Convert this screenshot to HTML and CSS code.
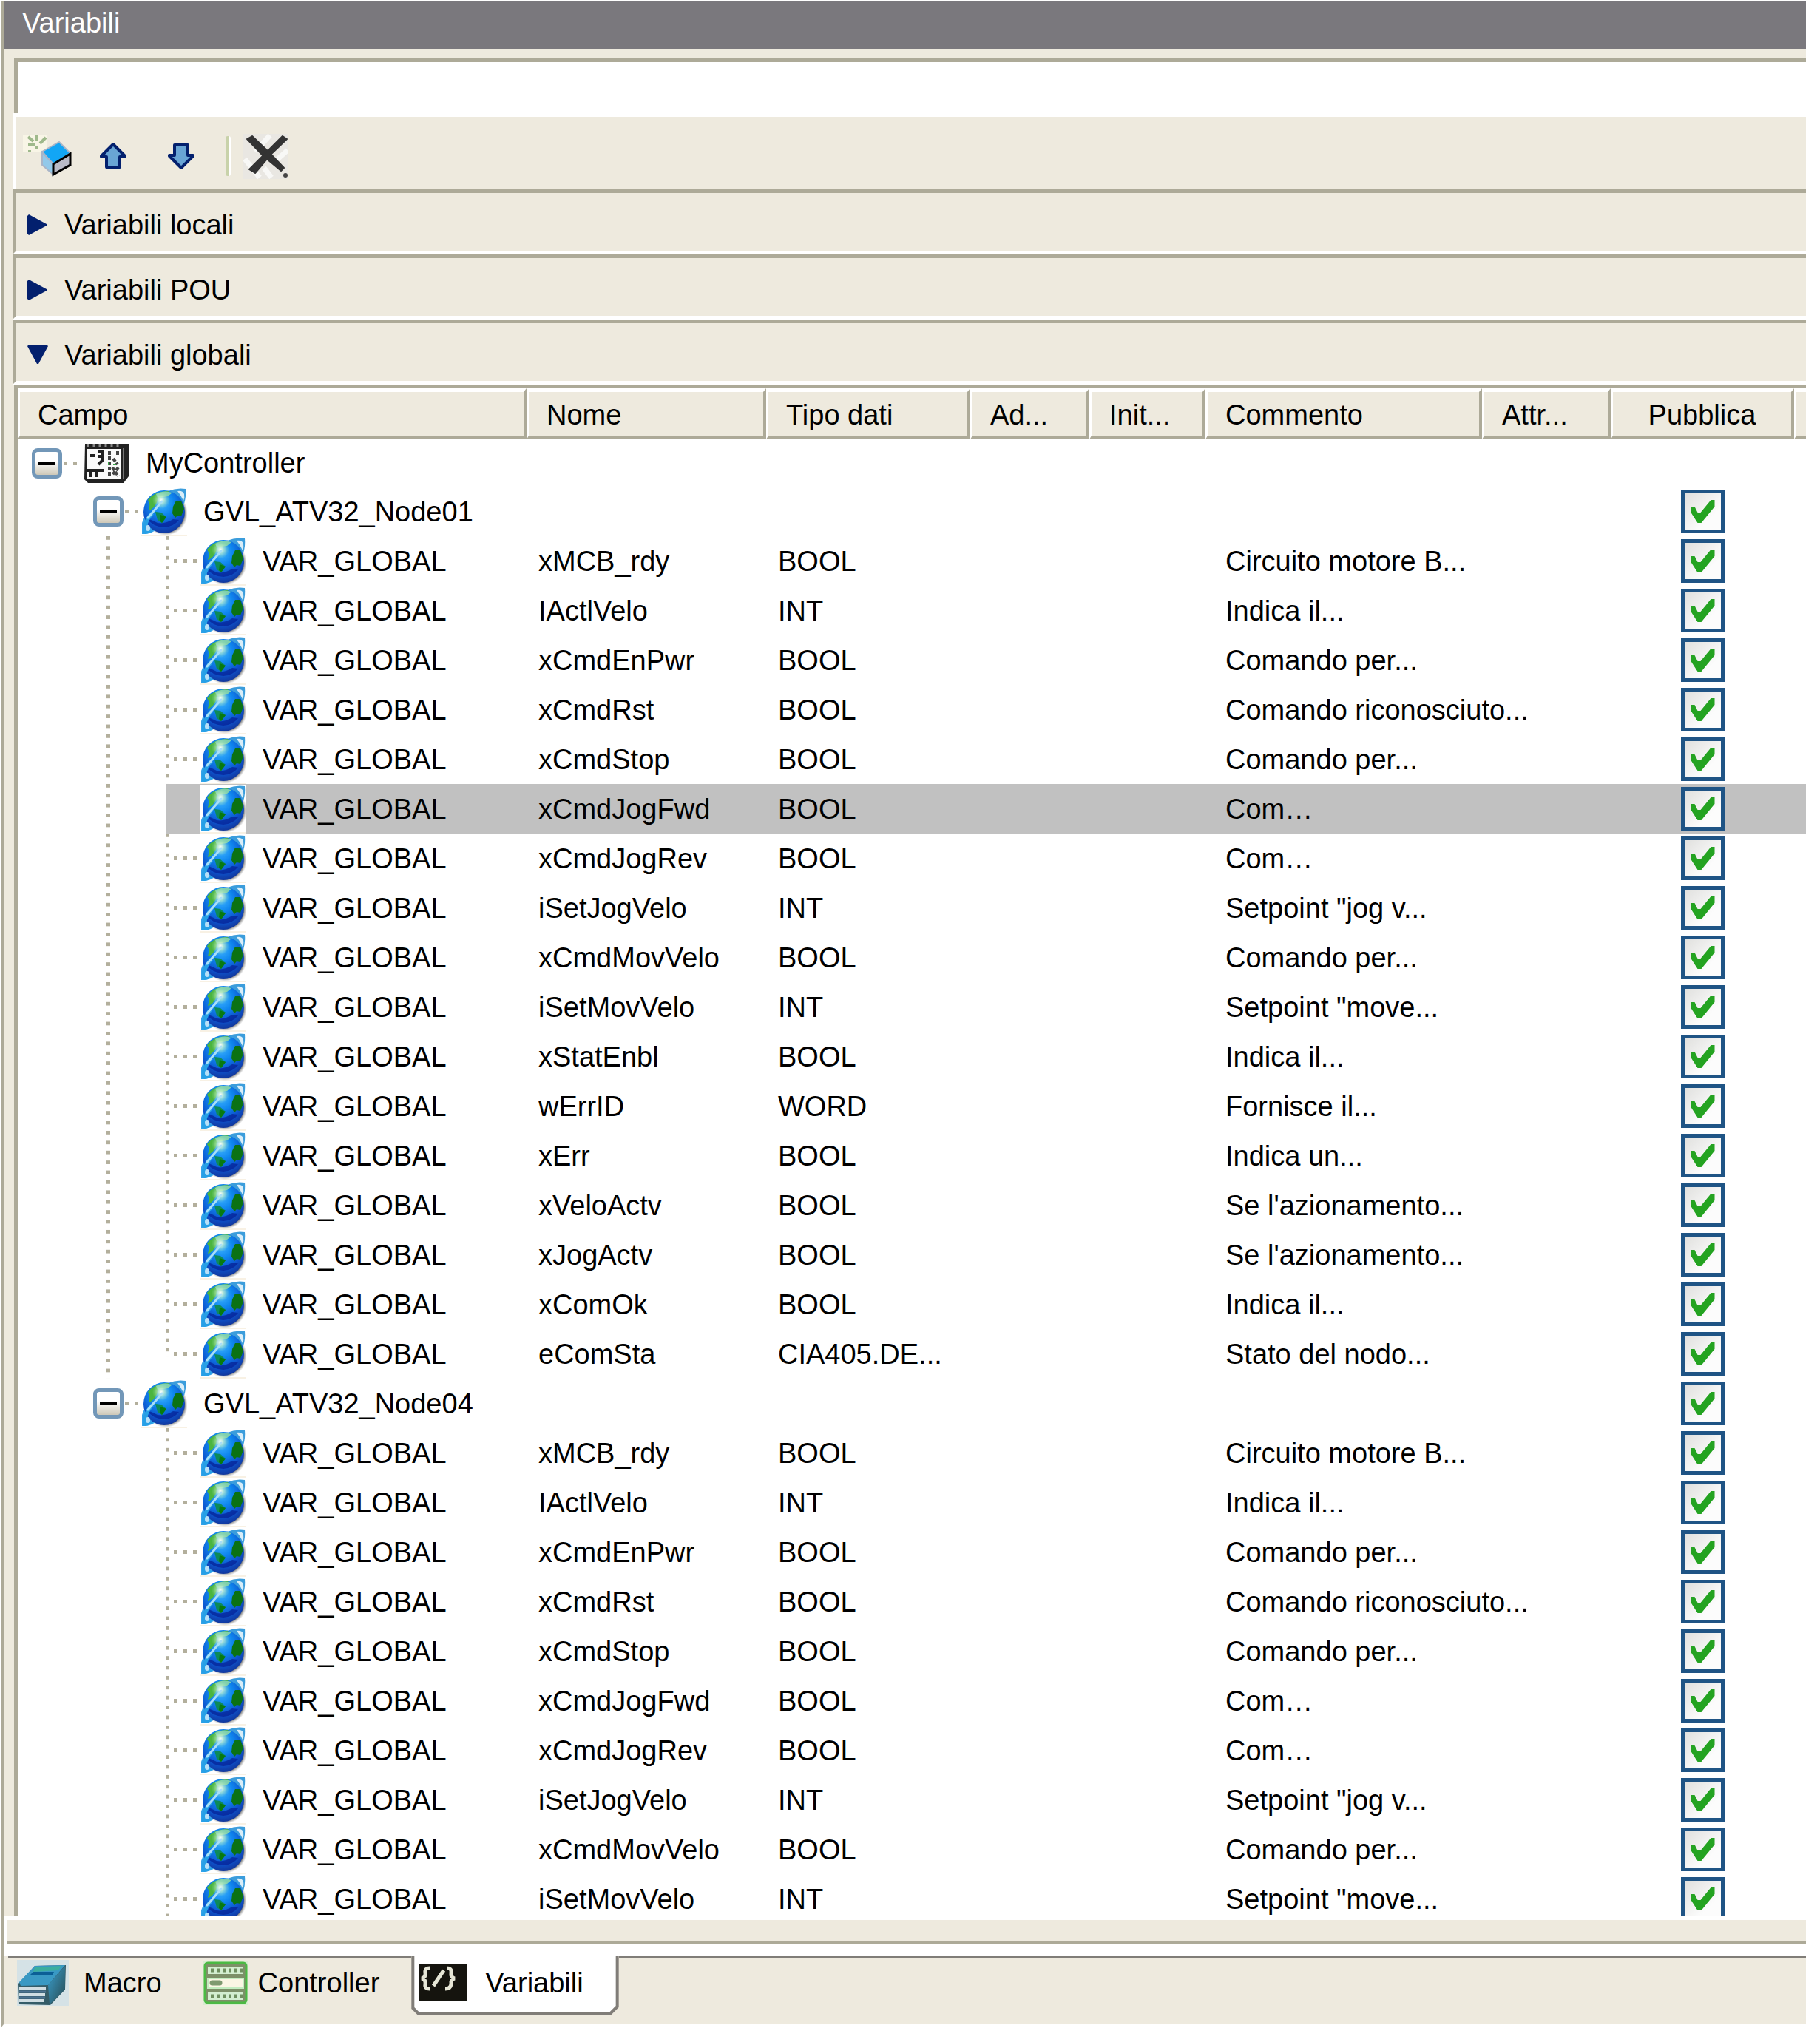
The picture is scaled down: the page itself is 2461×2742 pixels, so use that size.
FILE: index.html
```html
<!DOCTYPE html>
<html lang="it">
<head>
    <meta charset="UTF-8">
    <meta name="viewport" content="width=device-width, initial-scale=1.0">
    <title>Variabili</title>
    <link rel="stylesheet" href="styles.css">
</head>
<body>
    <!-- Shared icons -->
    <svg class="defs" width="0" height="0" aria-hidden="true">
        <defs>
            <radialGradient id="sea" cx="0.45" cy="0.3" r="0.7">
                <stop offset="0" stop-color="#3fb4ff"/>
                <stop offset="0.4" stop-color="#0f86ee"/>
                <stop offset="0.75" stop-color="#0d52cc"/>
                <stop offset="1" stop-color="#12389e"/>
            </radialGradient>
            <radialGradient id="shine">
                <stop offset="0" stop-color="#fff"/>
                <stop offset="0.3" stop-color="#d8f8d0" stop-opacity="0.8"/>
                <stop offset="1" stop-color="#9be0b0" stop-opacity="0"/>
            </radialGradient>
            <radialGradient id="shadow">
                <stop offset="0.8" stop-color="#333"/>
                <stop offset="1" stop-color="#999" stop-opacity="0"/>
            </radialGradient>
            <linearGradient id="side" x1="0" y1="0" x2="1" y2="1">
                <stop offset="0" stop-color="#3aa0d0"/>
                <stop offset="1" stop-color="#274a50"/>
            </linearGradient>
        </defs>
        <symbol id="globe" viewBox="0 0 62 66">
            <rect width="62" height="66" fill="#fff"/>
            <rect y="64" width="62" height="2" fill="#f8f1e4"/>
            <circle cx="33" cy="35" r="30" fill="url(#shadow)"/>
            <path d="M1 63 V48 Q4 38 12 32 L24 54 Q14 64 1 63Z" fill="#35a3ea"/>
            <path d="M36 5 Q48 0 60 2 Q61 12 58 22 L46 18Z" fill="#3b9ddc"/>
            <ellipse cx="31" cy="33" rx="28" ry="29" fill="url(#sea)"/>
            <path d="M9 17 Q18 5 38 5 Q30 12 22 14 Q22 24 13 30 L10 31 Q13 22 9 17Z" fill="#4bb53f"/>
            <path d="M20 9 Q30 3 42 7 L36 12 L22 14Z" fill="#7fcfae"/>
            <path d="M47 18 L54 18 L58 29 L54 39 L49 38 L46 41 L42 35 L43 26Z" fill="#0b7214"/>
            <path d="M19 33 L27 34 L34 40 L28 48 L22 44Z" fill="#0d8a5a"/>
            <path d="M26 37 L34 40 L28 48 L25 45Z" fill="#087a10"/>
            <path d="M8 42 Q14 44 22 48 Q32 50 43 43 L51 44 Q44 53 31 54 Q15 53 8 42Z" fill="#061f93" opacity="0.7"/>
            <circle cx="27" cy="17" r="12" fill="url(#shine)"/>
            <path d="M2 52 Q6 40 13 33 L17 36 Q9 45 8 53 Q10 57 16 58 Q8 65 2 62Z" fill="#27a0e6"/>
            <path d="M9 41 L28 19" stroke="#a9dff8" stroke-width="3" stroke-linecap="round"/>
            <ellipse cx="9" cy="55" rx="3" ry="4" fill="#b8e0f8"/>
            <path d="M49 5 Q56 4 58 9 Q59 14 57 18 Q54 11 49 5Z" fill="#d9edf8"/>
        </symbol>
        <symbol id="plc" viewBox="0 0 62 56">
            <path d="M2 2 H61 V46 L54 55 H6 L1 50Z" fill="#222"/>
            <path d="M4 9 H50 V49 H4Z" fill="#fafafa"/>
            <path d="M54 8 V50" stroke="#777" stroke-width="2"/>
            <path d="M6 2 V6 M14 2 V6 M22 2 V6 M30 2 V6 M38 2 V6 M46 2 V6" stroke="#888" stroke-width="3"/>
            <path d="M9 18 H16 M20 13 H27 M25 13 V25 L20 30 M20 19 H26 M5 38 H28 M10 39 V47 M18 39 V47" stroke="#222" stroke-width="4" fill="none"/>
            <path d="M35 12 V47 M40 22 L46 30 M46 12 V19 M39 34 L47 46 M47 34 L39 44" stroke="#444" stroke-width="4" stroke-dasharray="5 2"/>
            <path d="M34 26 V31 M40 30 H44" stroke="#3ba648" stroke-width="2"/>
        </symbol>
    </svg>

    <div class="panel">
        <h1 class="title">Variabili</h1>
        <input class="filter" type="text" aria-label="Filtro">

        <div class="toolbar">
            <button type="button" class="tool" aria-label="Nuova variabile">
                <svg width="66" height="56" viewBox="0 0 66 56">
                    <rect width="33" height="23" fill="#f8f5e6"/>
                    <path d="M7 2 L14 8 M19 0 V7 M31 3 L23 11 M7 13 H16 M19 15 V18 M9 20 V22" stroke="#9fb98c" stroke-width="4"/>
                    <path d="M26 22 L49 9 L64 24 L41 39Z" fill="#12a6f5" stroke="#a9b5c8" stroke-width="2"/>
                    <path d="M26 23 L41 39 V53 L26 40Z" fill="#92c9ea" stroke="#a9b5c8" stroke-width="2"/>
                    <path d="M41 39 L64 25 V40 L41 53Z" fill="#b9bac6" stroke="#000" stroke-width="3"/>
                </svg>
            </button>
            <button type="button" class="tool" aria-label="Sposta su">
                <svg width="36" height="36" viewBox="0 0 36 36">
                    <path d="M18 2 L34 18 V19 H27 V33 H9 V19 H2 V18Z" fill="#69a5d5" stroke="#03206e" stroke-width="4" stroke-linejoin="round"/>
                </svg>
            </button>
            <button type="button" class="tool" aria-label="Sposta giù">
                <svg width="36" height="36" viewBox="0 0 36 36">
                    <path d="M18 34 L34 18 V17 H27 V3 H9 V17 H2 V18Z" fill="#69a5d5" stroke="#03206e" stroke-width="4" stroke-linejoin="round"/>
                </svg>
            </button>
            <span class="separator"></span>
            <button type="button" class="tool" aria-label="Elimina">
                <svg width="61" height="61" viewBox="0 0 61 61">
                    <rect width="61" height="61" fill="#e9e7e2"/>
                    <path d="M2 34 L22 59 M36 2 L16 24 M60 22 L42 38 M28 46 L38 59" stroke="#f8f8f6" stroke-width="7"/>
                    <path d="M5 7 L12 3 L34 24 L55 46 L51 50 L27 30Z" fill="#333" stroke="#333" stroke-width="2" stroke-linejoin="round"/>
                    <path d="M53 3 L59 7 L37 28 L16 53 L8 48 L30 26Z" fill="#333" stroke="#333" stroke-width="2" stroke-linejoin="round"/>
                    <circle cx="57" cy="56" r="3" fill="#444"/>
                </svg>
            </button>
        </div>

        <button type="button" class="section" aria-expanded="false"><span class="arrow"></span>Variabili locali</button>
        <button type="button" class="section" aria-expanded="false"><span class="arrow"></span>Variabili POU</button>
        <button type="button" class="section" aria-expanded="true"><span class="arrow open"></span>Variabili globali</button>

        <div class="grid">
            <table>
                <colgroup>
                    <col class="col-campo">
                    <col class="col-nome">
                    <col class="col-tipo">
                    <col class="col-ad">
                    <col class="col-init">
                    <col>
                    <col class="col-attr">
                    <col class="col-pub">
                    <col class="col-end">
                </colgroup>
                <thead>
                    <tr>
                        <th>Campo</th>
                        <th>Nome</th>
                        <th>Tipo dati</th>
                        <th>Ad...</th>
                        <th>Init...</th>
                        <th>Commento</th>
                        <th>Attr...</th>
                        <th class="center">Pubblica</th>
                        <th></th>
                    </tr>
                </thead>
                <tbody id="rows"></tbody>
            </table>
        </div>

        <div class="splitter"></div>

        <div class="tabs">
            <button type="button" class="tab">
                <svg width="70" height="62" viewBox="0 0 70 62">
                    <rect width="70" height="62" fill="#d5e2e6"/>
                    <path d="M2 32 L24 8 L66 7 L65 40 L45 61 L3 60Z" fill="#345c68"/>
                    <path d="M3 30 L24 8 L65 7 L42 34 L5 35Z" fill="#3999c4"/>
                    <path d="M24 10 L60 8 L56 14 L22 16Z" fill="#3cae9e"/>
                    <path d="M22 16 H50 L48 20 H18Z" fill="#0b5f96"/>
                    <path d="M42 34 L65 8 V40 L44 60Z" fill="url(#side)"/>
                    <path d="M3 39 H39 M3 47 H38 M3 55 H37" stroke="#cfdde2" stroke-width="4"/>
                    <path d="M3 43 H39 M3 51 H38" stroke="#4b7190" stroke-width="3"/>
                </svg>
                Macro
            </button>
            <button type="button" class="tab">
                <svg width="60" height="60" viewBox="0 0 60 60">
                    <rect width="60" height="60" fill="#d8ecd0"/>
                    <rect x="2" y="3" width="56" height="54" rx="4" fill="#7d9068" stroke="#4cb944" stroke-width="3"/>
                    <rect x="6" y="8" width="48" height="10" fill="#d3eed0"/>
                    <rect x="6" y="24" width="48" height="13" fill="#fbf6e4" stroke="#c3edc0" stroke-width="2"/>
                    <rect x="6" y="43" width="48" height="10" fill="#d3eed0"/>
                    <path d="M10 13 H53 M10 48 H53" stroke="#6f8f5f" stroke-width="5" stroke-dasharray="4 4"/>
                    <path d="M12 30 H22" stroke="#7f9a70" stroke-width="7" stroke-linecap="round"/>
                </svg>
                Controller
            </button>
            <button type="button" class="tab active">
                <svg width="66" height="50" viewBox="0 0 66 50">
                    <rect width="66" height="50" fill="#15140e"/>
                    <path d="M15 5 Q8 5 9 11 Q10 18 4 19 Q10 20 9 27 Q8 33 15 33 M38 5 Q45 5 44 11 Q43 18 49 19 Q43 20 44 27 Q43 33 36 33 M34 8 L20 29" fill="none" stroke="#e6e6d6" stroke-width="5"/>
                </svg>
                Variabili
            </button>
            <span class="tab-rest"></span>
        </div>
    </div>

    <script src="script.js"></script>
</body>
</html>
```

FILE: styles.css
```css
* {
    box-sizing: border-box;
}

body {
    margin: 0;
    padding: 2px 19px 0 1px;
    background-color: #fff;
    color: #000;
    font-family: "Arial Narrow", "Liberation Sans", Arial, sans-serif;
    font-size: 38px;
    line-height: 50px;
}

button,
input {
    margin: 0;
    padding: 0;
    border: none;
    background: none;
    color: inherit;
    font: inherit;
}

svg {
    display: block;
    flex: none;
}

.defs {
    position: absolute;
}

.panel {
    display: flex;
    flex-direction: column;
    height: calc(100vh - 2px);
    border-left: 4px solid #adaa98;
    border-bottom: 5px solid #fff;
    background-color: #eeeade;
    overflow: hidden;
}

.title {
    flex: none;
    margin: 0;
    height: 64px;
    padding: 4px 25px;
    background-color: #7a787d;
    color: #fff;
    font-size: 38px;
    font-weight: normal;
}

.filter {
    flex: none;
    height: 74px;
    margin: 13px 0 0 14px;
    padding: 0 12px;
    border-top: 5px solid #adaa98;
    border-left: 5px solid #adaa98;
    background-color: #fff;
}

/* Toolbar */
.toolbar {
    flex: none;
    display: flex;
    align-items: center;
    height: 103px;
    margin-left: 12px;
    padding: 8px 9px 0;
    border-top: 5px solid #fff;
    border-left: 5px solid #fff;
}

.tool {
    margin-right: 38px;
}

.tool + .tool {
    margin-right: 56px;
}

.separator {
    width: 7px;
    height: 54px;
    margin: 0 17px 0 -14px;
    border-left: 5px solid #c8d2aa;
    border-right: 2px solid #fff;
    border-radius: 3px;
}

/* Collapsible sections */
.section {
    flex: none;
    display: flex;
    align-items: center;
    height: 88px;
    margin-left: 12px;
    padding: 8px 15px 0;
    border-top: 5px solid #adaa98;
    border-left: 5px solid #adaa98;
    border-bottom: 5px solid #fff;
    text-align: left;
}

.arrow {
    width: 28px;
    height: 28px;
    margin-right: 22px;
    background-color: #03206e;
    clip-path: polygon(0 2px, 2px 0, 26px 13px, 26px 15px, 2px 28px, 0 26px);
}

.arrow.open {
    clip-path: polygon(0 2px, 2px 0, 26px 0, 28px 2px, 15px 26px, 13px 26px);
}

/* Variable table */
.grid {
    flex: 1;
    min-height: 0;
    margin-left: 14px;
    border-top: 5px solid #adaa98;
    border-left: 5px solid #adaa98;
    background-color: #fff;
    overflow: hidden;
}

table {
    width: 100%;
    table-layout: fixed;
    border-collapse: separate;
    border-spacing: 0;
}

.col-campo { width: 688px; }
.col-nome { width: 324px; }
.col-tipo { width: 276px; }
.col-ad { width: 161px; }
.col-init { width: 157px; }
.col-attr { width: 174px; }
.col-pub { width: 248px; }
.col-end { width: 16px; }

th {
    height: 69px;
    padding: 2px 24px 0;
    border-style: solid;
    border-width: 5px 4px 5px 3px;
    border-color: #fff #adaa98 #adaa98 #fff;
    background-color: #eeeade;
    font-weight: normal;
    text-align: left;
    white-space: nowrap;
}

th:last-child {
    padding: 0;
    border-right: none;
}

.center {
    text-align: center;
}

td {
    height: 67px;
    padding: 0 16px;
    white-space: nowrap;
}

td:nth-child(6),
td.comment {
    padding: 0;
}

td.comment {
    padding-left: 27px;
}

td.campo {
    padding: 0;
}

.root td {
    height: 64px;
}

.selected td:not(.campo),
.selected .leaf {
    background-color: #c1c1c1;
}

.selected .leaf .vline,
.selected .leaf .hline {
    visibility: hidden;
}

.tree,
.leaf {
    display: flex;
    align-items: center;
    height: 67px;
}

.root .tree {
    height: 64px;
}

.leaf {
    flex: 1;
}

.pad {
    width: 19px;
}

.pad.node {
    width: 102px;
}

.guide {
    width: 200px;
    height: 67px;
    padding-left: 120px;
}

.pad,
.guide,
.vline,
.hline {
    flex: none;
}

.vline {
    display: block;
    width: 5px;
    height: 67px;
    background: linear-gradient(#b3af9c 5px, transparent 5px) 0 0 / 5px 13px;
    background-repeat: no-repeat round;
}

.vline.end {
    align-self: flex-start;
    height: 38px;
}

.hline {
    width: 39px;
    height: 5px;
    margin: 0 -3px 0 6px;
    background: linear-gradient(to right, #b3af9c 5px, transparent 5px) 0 0 / 13px 5px repeat-x;
}

.hline.short {
    width: 18px;
    margin: 0 4px 0 2px;
}

.root .hline.short {
    margin-right: 9px;
}

.tree svg {
    margin-right: 22px;
}

.toggle {
    flex: none;
    width: 41px;
    height: 41px;
    border: 5px solid #7297b8;
    border-radius: 8px;
    background: linear-gradient(#fff 40%, #cdc8b8);
}

.toggle::before {
    content: "";
    display: block;
    width: 23px;
    height: 5px;
    margin: 0 auto;
    background-color: #000;
}

.check {
    appearance: none;
    display: block;
    width: 59px;
    height: 59px;
    margin: 0 auto;
    border: 5px solid #1f5485;
    background: linear-gradient(135deg, #e0e0de, #fcfcfc 70%);
}

.check:checked::before {
    content: "";
    display: block;
    height: 49px;
    background-color: #24a321;
    clip-path: polygon(9px 18px, 14px 18px, 18px 26px, 22px 26px, 36px 9px, 41px 9px, 41px 18px, 23px 40px, 18px 40px, 9px 26px);
}

/* Bottom */
.splitter {
    flex: none;
    height: 53px;
    border-top: 5px solid #fff;
    border-left: 5px solid #fff;
    border-bottom: 15px solid #fff;
    box-shadow: inset 0 -4px #adaa98;
}

.tabs {
    flex: none;
    display: flex;
    height: 93px;
    padding-left: 6px;
}

.tab {
    display: flex;
    align-items: center;
    gap: 20px;
    padding: 0 56px 23px 12px;
    border-top: 4px solid #807d78;
}

.tab + .tab {
    gap: 14px;
    padding: 0 43px 23px 0;
}

.tab.tab.active {
    position: relative;
    z-index: 0;
    height: 80px;
    gap: 24px;
    padding: 0 48px 6px 10px;
    border-top: none;
    background-color: #807d78;
    clip-path: polygon(0 0, 100% 0, 100% calc(100% - 10px), calc(100% - 10px) 100%, 8px 100%, 0 calc(100% - 8px));
}

.tab.active::before {
    content: "";
    position: absolute;
    z-index: -1;
    inset: 0 4px 4px 4px;
    background-color: #fff;
    clip-path: polygon(0 0, 100% 0, 100% calc(100% - 8px), calc(100% - 8px) 100%, 6px 100%, 0 calc(100% - 6px));
}

.tab-rest {
    flex: 1;
    border-top: 4px solid #807d78;
}
```

FILE: script.js
```js
var nodeVars = [
    ['xMCB_rdy', 'BOOL', 'Circuito motore B...'],
    ['IActlVelo', 'INT', 'Indica il...'],
    ['xCmdEnPwr', 'BOOL', 'Comando per...'],
    ['xCmdRst', 'BOOL', 'Comando riconosciuto...'],
    ['xCmdStop', 'BOOL', 'Comando per...'],
    ['xCmdJogFwd', 'BOOL', 'Com…'],
    ['xCmdJogRev', 'BOOL', 'Com…'],
    ['iSetJogVelo', 'INT', 'Setpoint "jog v...'],
    ['xCmdMovVelo', 'BOOL', 'Comando per...'],
    ['iSetMovVelo', 'INT', 'Setpoint "move...'],
    ['xStatEnbl', 'BOOL', 'Indica il...'],
    ['wErrID', 'WORD', 'Fornisce il...'],
    ['xErr', 'BOOL', 'Indica un...'],
    ['xVeloActv', 'BOOL', "Se l'azionamento..."],
    ['xJogActv', 'BOOL', "Se l'azionamento..."],
    ['xComOk', 'BOOL', 'Indica il...'],
    ['eComSta', 'CIA405.DE...', 'Stato del nodo...']
];

var globe = '<svg width="62" height="66"><use href="#globe"/></svg>';
var toggle = '<button type="button" class="toggle" aria-label="Comprimi"></button>';

function cells(v, label) {
    return '<td>' + v[0] + '</td><td>' + v[1] + '</td><td></td><td></td><td class="comment">' + v[2] + '</td><td></td>' +
        '<td><input type="checkbox" class="check" checked aria-label="Pubblica ' + label + '"></td><td></td>';
}

function nodeRow(name) {
    return '<tr><td class="campo"><div class="tree"><span class="pad node"></span>' + toggle +
        '<span class="hline short"></span>' + globe + name + '</div></td>' + cells(['', '', ''], name) + '</tr>';
}

function varRow(v, selected, outer, last) {
    return '<tr' + (selected ? ' class="selected"' : '') + '><td class="campo"><div class="tree">' +
        '<span class="guide">' + (outer ? '<span class="vline"></span>' : '') + '</span>' +
        '<span class="leaf"><span class="vline' + (last ? ' end' : '') + '"></span><span class="hline"></span>' +
        globe + 'VAR_GLOBAL</span></div></td>' + cells(v, v[0]) + '</tr>';
}

var html = '<tr class="root"><td class="campo"><div class="tree"><span class="pad"></span>' + toggle +
    '<span class="hline short"></span><svg width="62" height="56"><use href="#plc"/></svg>MyController</div></td>' +
    '<td colspan="8"></td></tr>';

html += nodeRow('GVL_ATV32_Node01');
nodeVars.forEach(function(v, i) {
    html += varRow(v, v[0] === 'xCmdJogFwd', true, i === nodeVars.length - 1);
});

html += nodeRow('GVL_ATV32_Node04');
nodeVars.slice(0, 10).forEach(function(v) {
    html += varRow(v, false, false, false);
});

document.getElementById('rows').innerHTML = html;
```
